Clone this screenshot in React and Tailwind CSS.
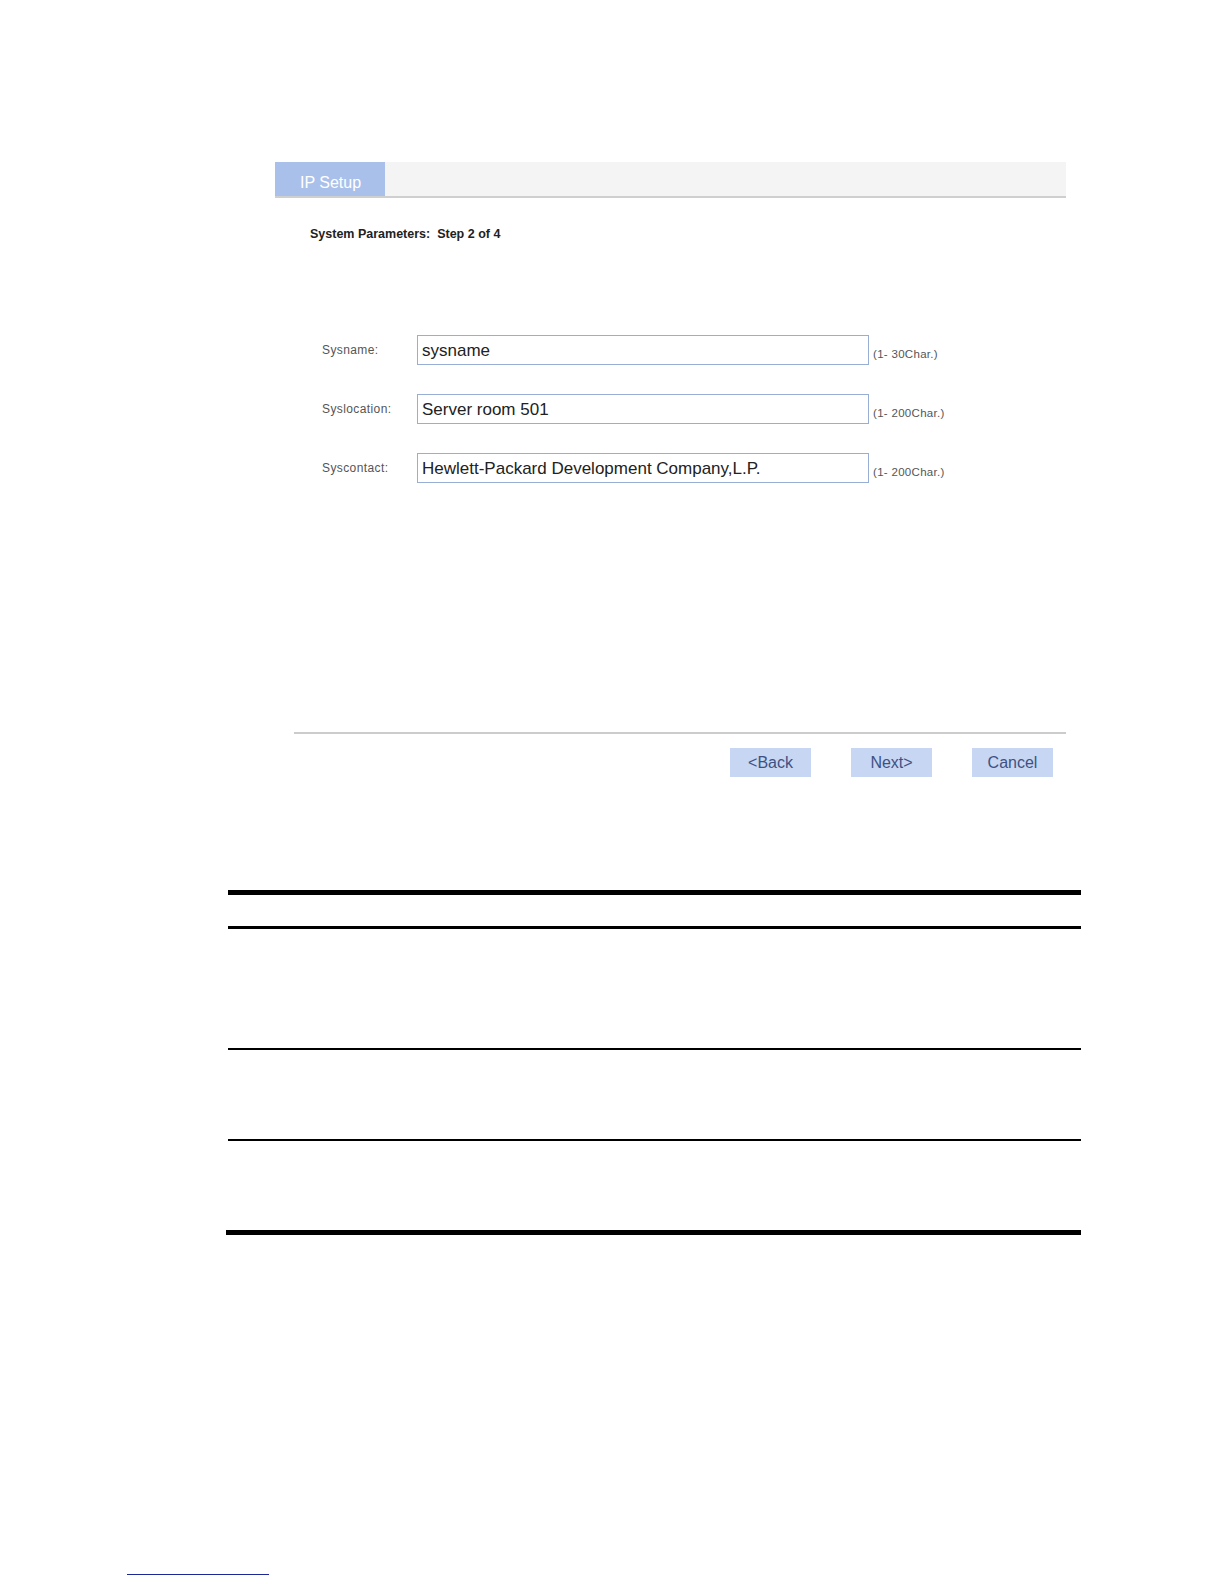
import React from 'react';

const fields = [
  { label: 'Sysname:', value: 'sysname', hint: '(1- 30Char.)' },
  { label: 'Syslocation:', value: 'Server room 501', hint: '(1- 200Char.)' },
  { label: 'Syscontact:', value: 'Hewlett-Packard Development Company,L.P.', hint: '(1- 200Char.)' },
];

const FieldRow = ({ label, value, hint }) => (
  <div className="flex items-center h-[30px]">
    <span className="w-[95px] text-[12px] tracking-[0.4px] text-[#555]">{label}</span>
    <div className="w-[452px] h-[30px] border border-[#98aed4] flex items-center pl-[4px] pt-[2px] text-[17px] text-[#222]">
      {value}
    </div>
    <span className="ml-[4px] mt-[10px] text-[11.5px] tracking-[0.3px] text-[#555]">{hint}</span>
  </div>
);

const WizardButton = ({ children }) => (
  <button type="button" className="w-[81px] h-[29px] bg-[#c6d6f3] text-[16px] text-[#3f5183] flex items-center justify-center pt-[1px]">
    {children}
  </button>
);

export default function App() {
  return (
    <div className="w-[1224px] h-[1584px] bg-white overflow-hidden" style={{ fontFamily: '"Liberation Sans", Arial, sans-serif' }}>
      {/* wizard header */}
      <div className="mt-[162px] ml-[275px] w-[791px] h-[36px] bg-[#f4f4f4] border-b-2 border-[#cfcfcf] flex">
        <div className="w-[110px] h-[34px] bg-[#a9c1ea] text-white text-[16px] pl-[25px] pt-[9px]">IP Setup</div>
      </div>

      <div className="mt-[29px] ml-[310px] text-[12.5px] leading-[14px] font-bold text-[#222] whitespace-pre">
        {'System Parameters:  Step 2 of 4'}
      </div>

      {/* form */}
      <div className="mt-[94px] ml-[322px] flex flex-col gap-[29px]">
        {fields.map((f) => (
          <FieldRow key={f.label} {...f} />
        ))}
      </div>

      <div className="mt-[249px] ml-[294px] w-[772px] h-[2px] bg-[#cccccc]" />

      <div className="mt-[14px] ml-[730px] flex gap-[40px]">
        <WizardButton>&lt;Back</WizardButton>
        <WizardButton>Next&gt;</WizardButton>
        <WizardButton>Cancel</WizardButton>
      </div>

      {/* table rules */}
      <div className="mt-[113px] ml-[228px] w-[853px] flex flex-col">
        <div className="h-[5px] bg-black" />
        <div className="h-[31px]" />
        <div className="h-[3px] bg-black" />
        <div className="h-[119px]" />
        <div className="h-[2px] bg-black" />
        <div className="h-[89px]" />
        <div className="h-[2px] bg-black" />
        <div className="h-[89px]" />
        <div className="h-[5px] bg-black -ml-[2px]" />
      </div>

      <div className="mt-[339px] ml-[127px] w-[142px] h-[1px] bg-[#1c2896]" />
    </div>
  );
}
